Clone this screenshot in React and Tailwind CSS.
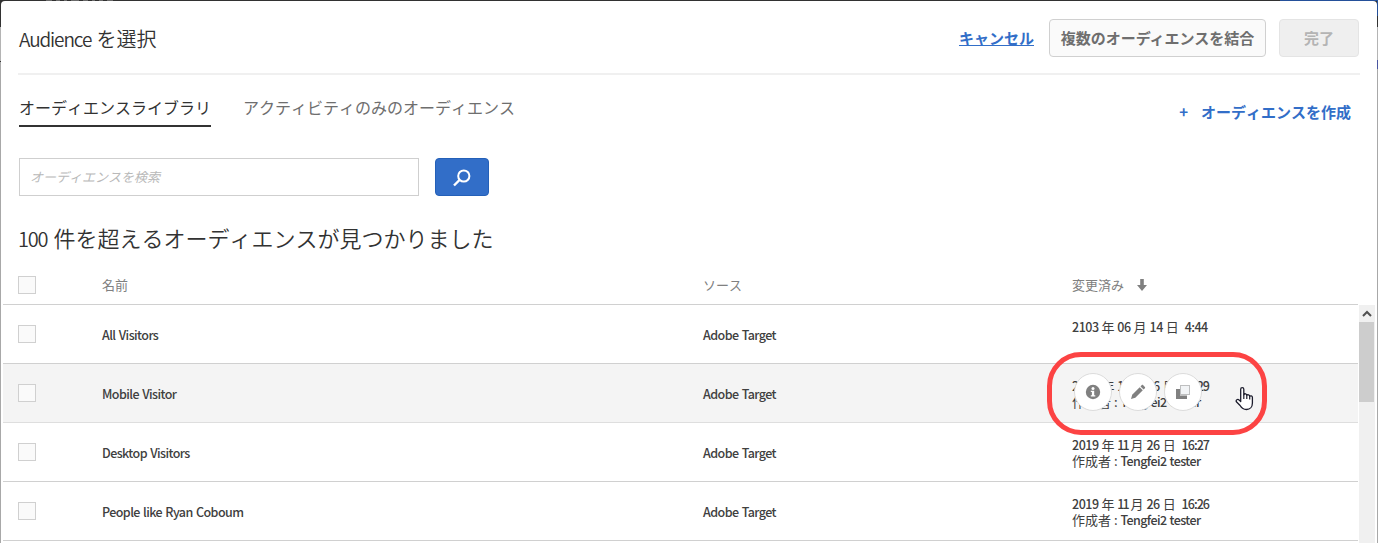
const rows = [
  { name: "All Visitors", date: ["2103", "06", "14", "4:44"], author: false },
  { name: "Mobile Visitor", date: ["2019", "11", "26", "16:29"], author: true, hover: true },
  { name: "Desktop Visitors", date: ["2019", "11", "26", "16:27"], author: true },
  { name: "People like Ryan Coboum", date: ["2019", "11", "26", "16:26"], author: true },
];

function Checkbox() {
  return <span className="block size-[18px] border border-[#d0d0d0] bg-[#fafafa]" />;
}

function RoundButton({ children }) {
  return (
    <button className="flex size-[38px] items-center justify-center rounded-full border border-[#dcdcdc] bg-white">
      {children}
    </button>
  );
}

function RowActions() {
  return (
    <div className="absolute left-[2px] top-[9px] flex gap-[7px]">
      <RoundButton>
        <svg width="16" height="16" viewBox="0 0 16 16">
          <circle cx="8" cy="8" r="7.2" fill="#808080" />
          <circle cx="8" cy="4.5" r="1.5" fill="#fff" />
          <path d="M5.800 6.800h3.400v4.400h1.100v1.300H5.800v-1.300h1.100V8.100H5.800z" fill="#fff" />
        </svg>
      </RoundButton>
      <RoundButton>
        <svg width="16" height="16" viewBox="0 0 16 16" fill="#808080">
          <path d="M1 15l1.200-4.300L9.700 3.200l3.100 3.100L5.300 13.800z" />
          <path d="M10.500 2.400l1.300-1.300c.4-.4.8-.4 1.200 0l1.900 1.900c.4.400.4.800 0 1.200l-1.300 1.300z" />
        </svg>
      </RoundButton>
      <RoundButton>
        <svg width="16" height="16" viewBox="0 0 16 16">
          <path d="M1 5h4v6.500h7V15H1z" fill="#808080" />
          <rect x="5" y="1" width="10" height="10" fill="#f2f4f6" />
          <rect x="5.500" y="1.500" width="9" height="9" fill="none" stroke="#8a8a8a" strokeDasharray="1 1" />
        </svg>
      </RoundButton>
    </div>
  );
}

const numTracking = {
  2: "tracking-[-0.45px]",
  4: "tracking-[-0.5px]",
  5: "tracking-[-0.95px]",
};

function Num({ children }) {
  return (
    <span className={`text-[12.5px] font-medium ${children === "11" ? "tracking-[-2px]" : numTracking[children.length]}`}>
      {children}
    </span>
  );
}

function Modified({ row }) {
  const [y, m, d, t] = row.date;
  return (
    <div className="relative h-full whitespace-pre pt-[14px] text-[13px] leading-[16px]">
      <div><Num>{y}</Num> 年 <Num>{m}</Num> 月 <Num>{d}</Num> 日  <Num>{t}</Num></div>
      {row.author && (
        <div>作成者 : <span className="text-[12.5px] font-medium tracking-[-0.6px] [word-spacing:1px]">Tengfei2 tester</span></div>
      )}
      {row.hover && <RowActions />}
    </div>
  );
}

/* Slivers of the page behind the dialog, visible around its edges. */
function Backdrop() {
  return (
    <>
      <div className="absolute left-0 top-0 flex h-full w-px flex-col">
        <div className="h-[27px] bg-[#323232]" />
        <div className="h-[34px] bg-[#b4b4b4]" />
        <div className="h-px bg-[#323232]" />
        <div className="flex-1 bg-[#a8a8a8]" />
      </div>
      <div className="absolute right-0 top-0 flex h-full w-px flex-col">
        <div className="h-[16px] bg-[#24509a]" />
        <div className="h-[11px] bg-[#323232]" />
        <div className="h-[33px] bg-[#b4b4b4]" />
        <div className="h-[9px] bg-[#4a56a0]" />
        <div className="flex-1 bg-[#a8a8a8]" />
      </div>
      <div className="absolute right-0 top-0 h-px w-[98px] bg-[#24509a]" />
      <div className="absolute left-[46px] top-0 flex h-px gap-[4px]">
        {[6, 4, 3, 8, 5, 3, 4, 6].map((w, i) => (
          <span key={i} className="h-px bg-[#6a6a6a]" style={{ width: w }} />
        ))}
      </div>
    </>
  );
}

export default function App() {
  return (
    <div className="relative h-[543px] w-full overflow-hidden bg-[#323232] pt-px font-['Noto_Sans_CJK_JP',sans-serif] text-[#323232]">
      <Backdrop />
      <div className="relative mx-px h-[542px] overflow-hidden rounded-t-[4px] bg-white">
        <header className="mx-[17px] flex h-[74px] items-start border-b-2 border-[#f0f0f0] pr-px pt-[18px]">
          <h1 className="mt-[4px] flex-1 whitespace-pre pl-px text-[20px] font-[350] leading-[32px]">
            <span className="mr-[2px] text-[19px] tracking-[-1.1px]">Audience </span><span className="[font-kerning:none]">を選択</span>
          </h1>
          <a className="mt-[7px] text-[15px] font-bold leading-[24px] text-[#326ec8] underline">キャンセル</a>
          <button className="ml-[15px] h-[38px] w-[217px] rounded-[4px] border border-[#d0d0d0] bg-[#fafafa] text-[15px] font-bold text-[#6e6e6e]">複数のオーディエンスを結合</button>
          <button className="ml-[13px] h-[38px] w-[80px] rounded-[4px] border border-[#e4e4e4] bg-[#efefef] text-[15px] font-bold text-[#b4b4b4]">完了</button>
        </header>
        <nav className="flex h-[52px] items-start pl-[18px] pr-[26px] text-[16px] [font-kerning:none]">
          <a className="mt-[20px] h-[32px] border-b-2 border-[#323232] leading-[24px]">オーディエンスライブラリ</a>
          <a className="ml-[32px] mt-[20px] leading-[24px] text-[#6e6e6e]">アクティビティのみのオーディエンス</a>
          <a className="ml-auto mt-[25px] flex text-[15px] font-bold leading-[24px] text-[#326ec8]">
            <span className="mr-[13px]">+</span>オーディエンスを作成
          </a>
        </nav>
        <div className="mt-[31px] flex gap-[16px] pl-[18px]">
          <div className="h-[38px] w-[400px] border border-[#cfcfcf] pl-[10px] text-[13px] italic leading-[36px] text-[#b9b9b9] [font-kerning:none]">オーディエンスを検索</div>
          <button className="flex h-[38px] w-[54px] items-center justify-center rounded-[4px] border border-[#2460b8] bg-[#326ec8]">
            <svg width="20" height="20" viewBox="0 0 20 20" fill="none" stroke="#fff" strokeWidth="2">
              <circle cx="11.800" cy="9" r="5.600" /><path d="M7.500 13L2 18.500" strokeWidth="2.400" />
            </svg>
          </button>
        </div>
        <h2 className="mt-[25px] h-[32px] whitespace-pre pl-[17px] text-[22px] font-[350] leading-[32px] [font-kerning:none]">
          <span className="mr-[3px] text-[20px] tracking-[-1.2px]">100 </span>件を超えるオーディエンスが見つかりました
        </h2>
        <div className="ml-[2px] mt-[12px] grid h-[40px] w-[1355px] grid-cols-[99px_601px_369px_1fr] items-center border-b border-[#d0d0d0] text-[13px] text-[#808080]">
          <div className="pl-[15px]"><Checkbox /></div>
          <div>名前</div>
          <div className="[font-kerning:none]">ソース</div>
          <div className="flex items-center gap-[13px]">変更済み
            <svg width="10" height="12" viewBox="0 0 10 12" fill="#808080"><path d="M3.200 0h3.600v6H10L5 12 0 6h3.200z" /></svg>
          </div>
        </div>
        <div className="flex pl-[2px]">
          <div className="w-[1355px] text-[#404040]">
            {rows.map((r) => (
              <div key={r.name} className={`grid h-[59px] grid-cols-[99px_601px_369px_1fr] items-center border-b ${r.hover ? "border-[#dedede] bg-[#f4f4f4]" : "border-[#d0d0d0]"}`}>
                <div className="pl-[15px]"><Checkbox /></div>
                <div className="pt-[2px] text-[12.5px] font-medium tracking-[-0.57px] [word-spacing:1px]">{r.name}</div>
                <div className="pt-[2px] text-[12.5px] font-medium tracking-[-0.57px] [word-spacing:1px]">Adobe Target</div>
                <Modified row={r} />
              </div>
            ))}
          </div>
          <div className="ml-px h-[238px] w-[16px] bg-[#f0f0f0]">
            <div className="flex h-[17px] items-center justify-center">
              <svg width="10" height="8" viewBox="0 0 10 8" fill="none" stroke="#505050" strokeWidth="2"><path d="M1 6l4-4 4 4" /></svg>
            </div>
            <div className="h-[80px] w-[15px] bg-[#cdcdcd]" />
          </div>
        </div>
      </div>
      <div className="absolute left-[1047px] top-[352px] h-[83px] w-[220px] rounded-[34px] border-[5px] border-[#fc4343]" />
      <svg className="absolute left-[1235px] top-[386px]" width="20" height="26" viewBox="0 0 20 26">
        <path d="M5.700 15.500V3.200c0-2.100 3.100-2.100 3.100 0v5.600c.5-1.600 3-1.300 3 .6.600-1.200 2.900-.8 2.900 1 .6-1 2.700-.6 2.700 1V17c0 3.600-2.200 6.500-6 6.500-3.400 0-4.800-1.500-6.300-4L1.400 15.800c-.9-1.700 1.300-3.200 2.700-1.700z" fill="#fff" stroke="#1c1c2c" strokeWidth="1.300" strokeLinejoin="round" />
        <path d="M8.800 8.500v4.500M11.800 9.500v3.500M14.700 10.500v3" fill="none" stroke="#1c1c2c" strokeWidth="1.200" />
      </svg>
    </div>
  );
}
